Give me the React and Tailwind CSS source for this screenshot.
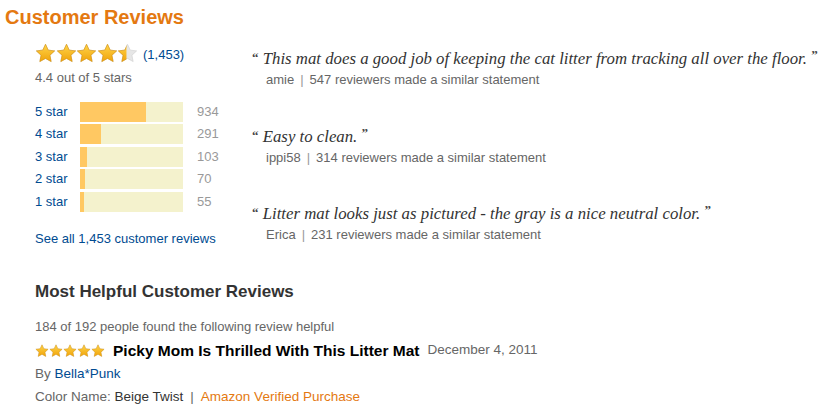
const STAR = "M10 1.2l2.6 5.6 6.1.7-4.5 4.2 1.2 6-5.4-3-5.4 3 1.2-6L1.3 7.5l6.1-.7z";

const Star = ({ size = 20, fill = 1, id }) => (
  <svg width={size} height={size} viewBox="0 0 20 20" className="shrink-0">
    <defs>
      <linearGradient id={`g-${id}`} x1="0" y1="0" x2="0" y2="1">
        <stop offset="0" stopColor="#ffd54a" />
        <stop offset="1" stopColor="#f0a30a" />
      </linearGradient>
      <clipPath id={`c-${id}`}>
        <rect x="0" y="0" width={20 * fill} height="20" />
      </clipPath>
    </defs>
    <path d={STAR} fill="#e6e6e6" stroke="#cfcfcf" strokeWidth="0.6" />
    <path d={STAR} fill={`url(#g-${id})`} stroke="#d9920a" strokeWidth="0.6" clipPath={`url(#c-${id})`} />
  </svg>
);

const bars = [
  { label: "5 star", count: 934 },
  { label: "4 star", count: 291 },
  { label: "3 star", count: 103 },
  { label: "2 star", count: 70 },
  { label: "1 star", count: 55 }
];

const quotes = [
  { text: "This mat does a good job of keeping the cat litter from tracking all over the floor.", who: "amie", n: 547 },
  { text: "Easy to clean.", who: "ippi58", n: 314 },
  { text: "Litter mat looks just as pictured - the gray is a nice neutral color.", who: "Erica", n: 231 }
];

export default function App() {
  const total = 1453;

  return (
    <div className="h-[410px] w-[840px] bg-white font-['Liberation_Sans',Arial,sans-serif]">
      <h2 className="px-[5px] pt-[6px] text-[20px] font-bold leading-[22px] text-[#e47911]">Customer Reviews</h2>

      <div className="flex pl-[35px] pt-[14px]">
        <div className="w-[217px] shrink-0">
          <div className="flex items-center">
            <div className="flex -space-x-[0.5px]">
              {[1, 1, 1, 1, 0.45].map((f, i) => (
                <Star key={i} size={21} fill={f} id={`big${i}`} />
              ))}
            </div>
            <span className="ml-[5px] mt-[3px] text-[13px] text-[#004b91]">(1,453)</span>
          </div>
          <p className="mt-[5px] text-[13px] leading-[16px] text-[#666]">4.4 out of 5 stars</p>

          <div className="mt-[16px] flex flex-col gap-[2.5px]">
            {bars.map((b) => (
              <div key={b.label} className="flex h-[20px] items-center text-[13px]">
                <span className="w-[45px] text-[#004b91]">{b.label}</span>
                <div className="h-[20px] w-[103px] bg-[#f4f2cd]">
                  <div
                    className="h-full bg-[#ffc862]"
                    style={{ width: `${Math.max(4, Math.round((b.count / total) * 103))}px` }}
                  />
                </div>
                <span className="ml-[14px] text-[#999]">{b.count}</span>
              </div>
            ))}
          </div>

          <p className="mt-[19px] text-[13px] leading-[16px] text-[#004b91]">See all 1,453 customer reviews</p>
        </div>

        <div className="flex flex-col gap-[34.5px] pt-[3px]">
          {quotes.map((q) => (
            <div key={q.who}>
              <p className="font-['Liberation_Serif',Georgia,serif] text-[16.8px] italic leading-[20px] text-[#333]">
                <span className="align-[2px] text-[13px] font-bold not-italic text-[#444]">“</span> {q.text}{" "}
                <span className="align-[5px] text-[13px] font-bold not-italic text-[#444]">”</span>
              </p>
              <p className="mt-[3px] pl-[14px] text-[13px] leading-[16px] text-[#666]">
                {q.who}
                <span className="mx-[6px] text-[#999]">|</span>
                {q.n} reviewers made a similar statement
              </p>
            </div>
          ))}
        </div>
      </div>

      <div className="pl-[35px] pt-[35px]">
        <h3 className="text-[17px] font-bold leading-[20px] text-[#333]">Most Helpful Customer Reviews</h3>
        <p className="mt-[17px] text-[13px] leading-[16px] text-[#666]">184 of 192 people found the following review helpful</p>
        <div className="mt-[7px] flex h-[18px] items-center">
          <div className="flex">
            {[0, 1, 2, 3, 4].map((i) => (
              <Star key={i} size={14} id={`sm${i}`} />
            ))}
          </div>
          <span className="ml-[8px] text-[15.5px] font-bold text-black">Picky Mom Is Thrilled With This Litter Mat</span>
          <span className="ml-[8px] text-[13.5px] text-[#666]">December 4, 2011</span>
        </div>
        <p className="mt-[6px] text-[13.5px] leading-[16px] text-[#666]">
          By <span className="text-[#004b91]">Bella*Punk</span>
        </p>
        <p className="mt-[7px] text-[13.5px] leading-[16px] text-[#666]">
          Color Name: <span className="text-[#333]">Beige Twist</span>
          <span className="mx-[7px]">|</span>
          <span className="text-[#e47911]">Amazon Verified Purchase</span>
        </p>
      </div>
    </div>
  );
}
